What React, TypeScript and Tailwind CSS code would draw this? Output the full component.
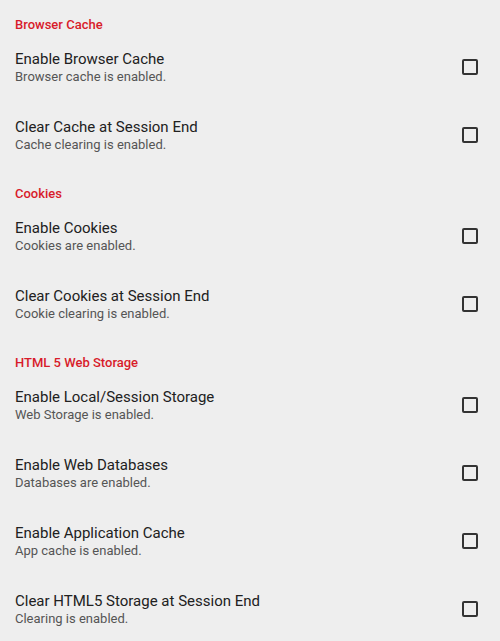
const sections = [
  {
    title: "Browser Cache",
    items: [
      { title: "Enable Browser Cache", summary: "Browser cache is enabled." },
      { title: "Clear Cache at Session End", summary: "Cache clearing is enabled." },
    ],
  },
  {
    title: "Cookies",
    items: [
      { title: "Enable Cookies", summary: "Cookies are enabled." },
      { title: "Clear Cookies at Session End", summary: "Cookie clearing is enabled." },
    ],
  },
  {
    title: "HTML 5 Web Storage",
    items: [
      { title: "Enable Local/Session Storage", summary: "Web Storage is enabled." },
      { title: "Enable Web Databases", summary: "Databases are enabled." },
      { title: "Enable Application Cache", summary: "App cache is enabled." },
      { title: "Clear HTML5 Storage at Session End", summary: "Clearing is enabled." },
    ],
  },
];

export default function App() {
  return (
    <div className="min-h-screen w-[500px] bg-[#eeeeee] font-['Roboto',sans-serif]">
      {sections.map((s) => (
        <section key={s.title}>
          <h2 className="pt-[17px] pl-[15px] text-[13px] leading-4 font-medium text-[#d81b2a]">
            {s.title}
          </h2>
          {s.items.map((it) => (
            <div key={it.title} className="flex items-center py-4 pl-[15px] pr-[22px]">
              <div className="flex-1">
                <div className="text-[15px] leading-5 text-[#212121]">{it.title}</div>
                <div className="text-[13px] leading-4 text-[#555555]">{it.summary}</div>
              </div>
              <div className="h-4 w-4 rounded-[2px] border-2 border-[#333333]" />
            </div>
          ))}
        </section>
      ))}
    </div>
  );
}
